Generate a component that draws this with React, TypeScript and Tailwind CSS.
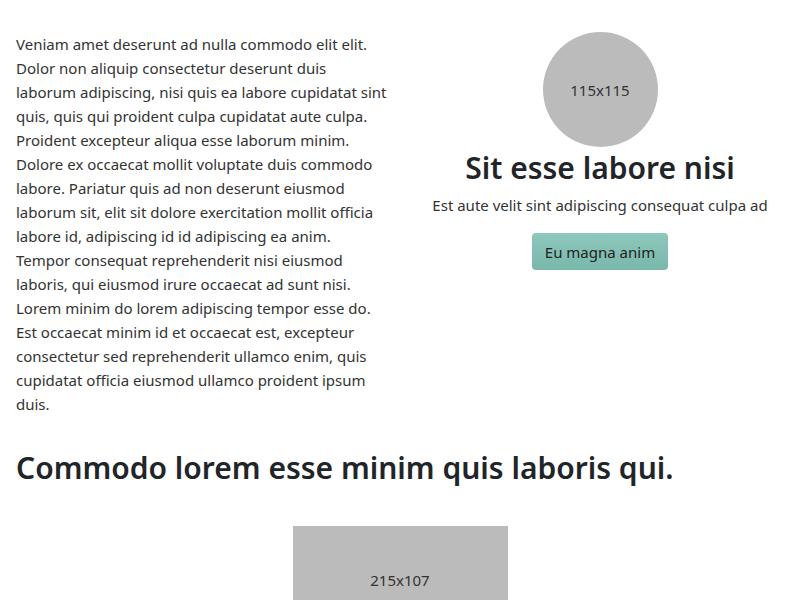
export default function App() {
  return (
    <div className="min-h-screen bg-white px-4 pt-8 text-[15px] leading-6 text-[#333] [font-family:'Noto_Sans',sans-serif]">
      <div className="grid grid-cols-[372px_1fr] gap-7">
        <p>
          Veniam amet deserunt ad nulla commodo elit elit. Dolor non aliquip consectetur deserunt duis laborum
          adipiscing, nisi quis ea labore cupidatat sint quis, quis qui proident culpa cupidatat aute culpa. Proident
          excepteur aliqua esse laborum minim. Dolore ex occaecat mollit voluptate duis commodo labore. Pariatur quis ad
          non deserunt eiusmod laborum sit, elit sit dolore exercitation mollit officia labore id, adipiscing id id
          adipiscing ea anim. Tempor consequat reprehenderit nisi eiusmod laboris, qui eiusmod irure occaecat ad sunt
          nisi. Lorem minim do lorem adipiscing tempor esse do. Est occaecat minim id et occaecat est, excepteur
          consectetur sed reprehenderit ullamco enim, quis cupidatat officia eiusmod ullamco proident ipsum duis.
        </p>

        <div className="flex flex-col items-center text-center">
          <div className="flex h-[115px] w-[115px] items-center justify-center rounded-full bg-[#bbbbbb] text-[#333]">
            115x115
          </div>
          <h1 className="mt-0.5 text-[30px] font-semibold leading-[38px] text-[#212529]">Sit esse labore nisi</h1>
          <p className="mt-1.5">Est aute velit sint adipiscing consequat culpa ad</p>
          <button className="mt-4 h-[37px] w-[136px] rounded bg-gradient-to-b from-[#8fc7bd] to-[#78b8ab] text-[#222]">
            Eu magna anim
          </button>
        </div>
      </div>

      <h2 className="mt-[33px] text-[30px] font-semibold leading-[38px] text-[#212529]">
        Commodo lorem esse minim quis laboris qui.
      </h2>

      <div className="mt-[39px] flex justify-center">
        <div className="flex h-[107px] w-[215px] items-center justify-center bg-[#bbbbbb] text-[#333]">215x107</div>
      </div>
    </div>
  );
}
